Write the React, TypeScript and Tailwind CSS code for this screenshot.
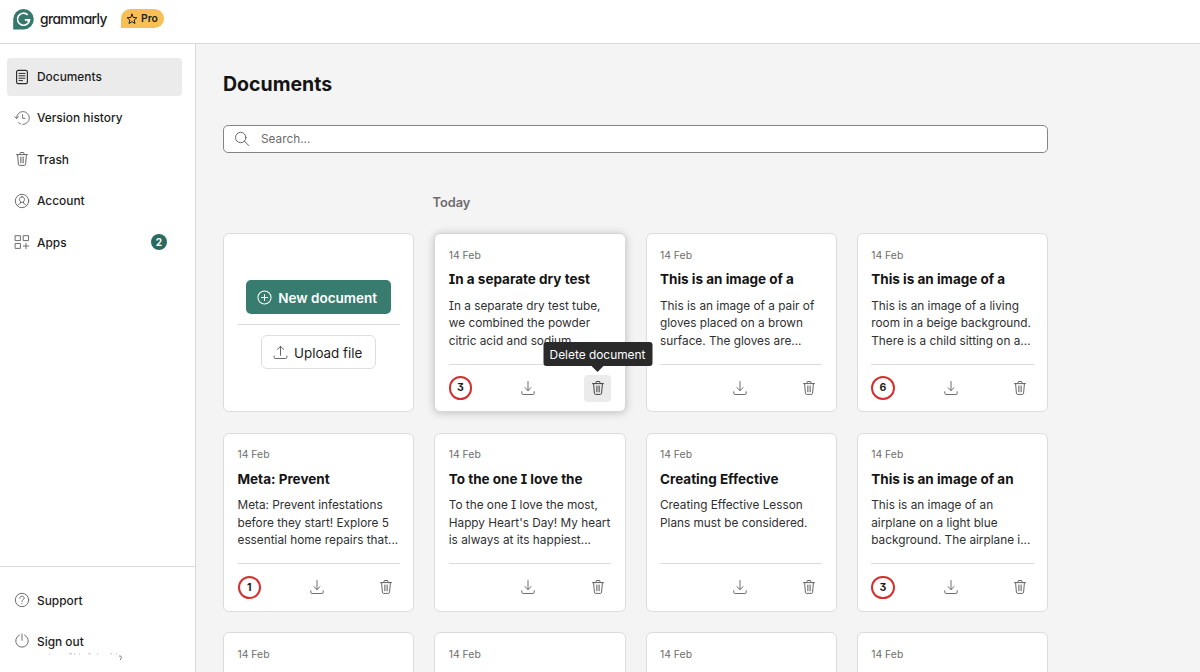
import React from "react";

type IconProps = { className?: string };

const stroke = {
  fill: "none",
  stroke: "currentColor",
  strokeLinecap: "round" as const,
  strokeLinejoin: "round" as const,
  viewBox: "0 0 16 16",
};

const DocIcon = ({ className }: IconProps) => (
  <svg {...stroke} className={className}>
    <rect x="2.6" y="1.4" width="10.8" height="13.2" rx="1.6" strokeWidth="1.15" />
    <path d="M5 4.4h6M5 6.8h6M5 9.2h6M5 11.6h3.6" strokeWidth="1" />
  </svg>
);

const HistoryIcon = ({ className }: IconProps) => (
  <svg {...stroke} className={className} strokeWidth="0.9">
    <path d="M2.5 8.2A6.4 6.4 0 1 1 8.8 14.4M4.6 12.7a6.4 6.4 0 0 0 2.1 1.3" />
    <path d="M.7 6.8l1.8 1.7 1.9-1.7M8.6 4.7v3.7h2.5" />
  </svg>
);

const TrashIcon = ({ className }: IconProps) => (
  <svg {...stroke} className={className} strokeWidth="1">
    <path d="M2.5 3.6h11M5.7 3.4l.7-1.9h3.2l.7 1.9M3.6 3.8l.8 9.4q.1 1.2 1.3 1.2h4.6q1.2 0 1.3-1.2l.8-9.4" />
    <path d="M6.6 6v5.8M9.4 6v5.8M8 6v5.8" strokeWidth="0.75" />
  </svg>
);

const AccountIcon = ({ className }: IconProps) => (
  <svg {...stroke} className={className} strokeWidth="0.95">
    <circle cx="8" cy="8" r="6.7" />
    <path d="M8 3.8c1.6 0 2.5 1.1 2.5 2.6S9.4 9.4 8 9.4 5.5 7.9 5.5 6.4 6.4 3.8 8 3.8zM6.5 9v1.2c-.2.7-1.8.6-2.7 2M9.5 9v1.2c.2.7 1.8.6 2.7 2" />
  </svg>
);

const AppsIcon = ({ className }: IconProps) => (
  <svg {...stroke} className={className} strokeWidth="0.95">
    <path d="M1.5 1.7h4.9v4.9H1.5zM9.6 1.7h4.9v4.9H9.6zM1.5 9.5h4.9v4.9H1.5zM12 9.3v5.4M9.3 12h5.4" />
  </svg>
);

const HelpIcon = ({ className }: IconProps) => (
  <svg {...stroke} className={className} strokeWidth="0.95">
    <circle cx="8" cy="8" r="6.7" />
    <path d="M5.9 6.3C5.9 4.9 6.8 4.2 8 4.2s2.2.8 2.2 1.9C10.2 7.5 8 7.7 8 9.5M8 11.6v.2" />
  </svg>
);

const PowerIcon = ({ className }: IconProps) => (
  <svg {...stroke} className={className} strokeWidth="0.95">
    <path d="M8 .9v6.4M5.4 2.1a6.3 6.3 0 1 0 5.2 0" />
  </svg>
);

const SearchIcon = ({ className }: IconProps) => (
  <svg {...stroke} className={className} strokeWidth="1">
    <circle cx="6.7" cy="6.5" r="5.2" />
    <path d="M10.5 10.3l4.3 4.3" />
  </svg>
);

const DownloadIcon = ({ className }: IconProps) => (
  <svg {...stroke} className={className} strokeWidth="0.95">
    <path d="M8 1.5v9M4.9 7.6L8 10.6l3.1-3M1.8 11.7v1.5q0 1.3 1.3 1.3h9.8q1.3 0 1.3-1.3v-1.5" />
  </svg>
);

const UploadIcon = ({ className }: IconProps) => (
  <svg {...stroke} className={className} strokeWidth="0.95">
    <path d="M8 11V1.5M4.7 4.6L8 1.5l3.3 3.1M1.2 11.7v1.5q0 1.2 1.2 1.2h11.2q1.2 0 1.2-1.2v-1.5" />
  </svg>
);

const PlusIcon = ({ className }: IconProps) => (
  <svg {...stroke} className={className} strokeWidth="1.1">
    <circle cx="8" cy="8" r="7" />
    <path d="M8 4.7v6.6M4.7 8h6.6" />
  </svg>
);

const StarIcon = ({ className }: IconProps) => (
  <svg {...stroke} className={className} strokeWidth="1.3">
    <path d="M8 1.5l1.75 4.4 4.75.35-3.6 3.1 1.1 4.65L8 11.5 4 14l1.1-4.65-3.6-3.1 4.75-.35z" />
  </svg>
);

const Logo = () => (
  <svg viewBox="0 0 21 21" className="h-[21px] w-[21px] shrink-0">
    <path d="M10.5 0A10.3 10.3 0 1 1 10.5 20.6H.2V10.3A10.3 10.3 0 0 1 10.5 0z" fill="#34796b" />
    <path d="M14.8 6A6 6 0 1 0 16.500 10.800h-4.700M16.500 10.800l-1.700 2.200" fill="none" stroke="#fff" strokeWidth="1.7" />
  </svg>
);

type NavProps = { label: string; Icon: React.FC<IconProps>; active?: boolean; badge?: number };

const NavItem = ({ label, Icon, active, badge }: NavProps) => (
  <a
    className={
      active
        ? "flex h-[38px] items-center rounded bg-[#ebebeb] pr-[15px] pl-[7px] text-[#1d1d1d]"
        : "flex h-[38px] items-center rounded pr-[15px] pl-[7px] text-[#1d1d1d]"
    }
  >
    <Icon className={active ? "h-4 w-4 text-[#2c2c2c]" : "h-4 w-4 text-[#666]"} />
    <span className="ml-[7px] flex-1 pt-px text-[11.9px] leading-[18px] font-medium">{label}</span>
    {badge && (
      <span className="flex h-4 w-4 items-center justify-center rounded-full bg-[#2b6a5f] text-[10px] font-bold text-white">
        {badge}
      </span>
    )}
  </a>
);

type Doc = { title?: string; lines?: string[]; alerts?: number; hovered?: boolean };

const docs: Doc[] = [
  { title: "In a separate dry test", lines: ["In a separate dry test tube,", "we combined the powder", "citric acid and sodium"], alerts: 3, hovered: true },
  { title: "This is an image of a", lines: ["This is an image of a pair of", "gloves placed on a brown", "surface. The gloves are..."] },
  { title: "This is an image of a", lines: ["This is an image of a living", "room in a beige background.", "There is a child sitting on a..."], alerts: 6 },
  { title: "Meta: Prevent", lines: ["Meta: Prevent infestations", "before they start! Explore 5", "essential home repairs that..."], alerts: 1 },
  { title: "To the one I love the", lines: ["To the one I love the most,", "Happy Heart's Day! My heart", "is always at its happiest..."] },
  { title: "Creating Effective", lines: ["Creating Effective Lesson", "Plans must be considered."] },
  { title: "This is an image of an", lines: ["This is an image of an", "airplane on a light blue", "background. The airplane i..."], alerts: 3 },
  {},
  {},
  {},
  {},
];

const DocCard = ({ title, lines, alerts, hovered }: Doc) => (
  <article
    className={
      hovered
        ? "flex flex-col rounded-md border border-[#d6d6d6] bg-white px-[13.5px] shadow-[0_1px_9px_rgba(0,0,0,0.22)]"
        : "flex flex-col rounded-md border border-[#dcdcdc] bg-white px-[13.5px]"
    }
  >
    <time className="mt-[13.3px] text-[10.4px] leading-4 text-[#6d6d6d]">14 Feb</time>
    {title && (
      <>
        <h3 className="mt-[5.7px] text-[13.5px] leading-[20px] font-bold whitespace-nowrap text-[#141414]">{title}</h3>
        <div className="mt-[8.1px] h-[54px] text-[11.8px] leading-[17.7px] whitespace-nowrap text-[#303030]">
          {lines?.map((l) => <p key={l}>{l}</p>)}
        </div>
        <div className="mt-[12.5px] flex h-[48px] items-center justify-between border-t border-[#dcdcdc]">
          <div className="w-6">
            {alerts && (
              <span className="flex h-[23.5px] w-[23.5px] items-center justify-center rounded-full border-2 border-[#d3302f] text-[10.5px] font-bold text-[#1b1b1b]">
                {alerts}
              </span>
            )}
          </div>
          <DownloadIcon className="h-4 w-4 text-[#666]" />
          <div
            className={
              hovered
                ? "relative flex h-[27px] w-[27px] items-center justify-center rounded bg-[#ebebeb] text-[#444]"
                : "relative flex h-[27px] w-[27px] items-center justify-center text-[#666]"
            }
          >
            <TrashIcon className="h-4 w-4" />
            {hovered && (
              <div className="absolute bottom-[35.5px] left-1/2 z-10 flex h-[24px] w-[109px] -translate-x-1/2 items-center justify-center rounded-[3px] bg-[#2a2a2a] pt-[1.5px] text-[11.9px] leading-[18px] whitespace-nowrap text-white">
                Delete document
                <svg viewBox="0 0 12 6" className="absolute top-full left-1/2 h-[6px] w-3 -translate-x-1/2">
                  <path d="M0 0h12L6 6z" fill="#2a2a2a" />
                </svg>
              </div>
            )}
          </div>
        </div>
      </>
    )}
  </article>
);

export default function App() {
  return (
    <div className="flex h-[672px] w-[1200px] flex-col overflow-hidden bg-white font-['Inter',sans-serif] text-[#1d1d1d] [font-feature-settings:'cv08','cv09']">
      <header className="flex h-[44px] shrink-0 items-start border-b border-[#dadada] pt-[9px] pl-[13px]">
        <Logo />
        <span className="ml-[6px] w-[67px] pt-px text-[13.8px] leading-[19px] font-medium tracking-[-0.6px] [font-feature-settings:'cv11']">grammarly</span>
        <span className="ml-[14px] flex h-[19px] w-[43px] items-center justify-center gap-[3px] rounded-full rounded-bl-none bg-[#f7bf56] pr-px pt-px text-[10.3px] font-semibold">
          <StarIcon className="h-3 w-3" />
          Pro
        </span>
      </header>
      <div className="flex min-h-0 flex-1">
        <aside className="flex w-[196px] shrink-0 flex-col border-r border-[#d9d9d9]">
          <nav className="flex flex-1 flex-col gap-[3.4px] px-[7px] pt-[13.5px] pr-[13px]">
            <NavItem label="Documents" Icon={DocIcon} active />
            <NavItem label="Version history" Icon={HistoryIcon} />
            <NavItem label="Trash" Icon={TrashIcon} />
            <NavItem label="Account" Icon={AccountIcon} />
            <NavItem label="Apps" Icon={AppsIcon} badge={2} />
          </nav>
          <div className="relative flex h-[106px] flex-col gap-[3.4px] border-t border-[#dadada] px-[7px] pt-[14px]">
            <NavItem label="Support" Icon={HelpIcon} />
            <NavItem label="Sign out" Icon={PowerIcon} />
            <svg viewBox="0 0 80 8" className="absolute top-[86px] left-[45px] h-2 w-20" fill="none" stroke="#666" strokeWidth="0.8">
              <path d="M4 1h1M24 .8h3M29 1h1M34.5.5v1M43.5.8h2M52 1h1M65.5.8h1.5M71 1h1" opacity="0.6" />
              <path d="M74 3q2.5-.5 2.5 1.5l-1 1.5v1" />
            </svg>
          </div>
        </aside>
        <main className="flex min-w-0 flex-1 flex-col overflow-hidden bg-[#f4f4f4] pl-[27px]">
          <h1 className="mt-[26px] text-[19.5px] leading-[28px] font-bold text-[#141414] [font-feature-settings:'cv11']">Documents</h1>
          <div className="mt-[27px] flex h-[28px] w-[825px] shrink-0 items-center rounded-[5px] border border-[#858585] bg-white pl-[10px]">
            <SearchIcon className="h-4 w-4 text-[#666]" />
            <span className="ml-[11px] text-[11.8px] leading-[18px] text-[#6b6b6b]">Search...</span>
          </div>
          <h2 className="mt-[40.2px] ml-[209.5px] text-[12.8px] leading-[20px] font-semibold text-[#6d6d6d]">Today</h2>
          <section className="mt-[20.25px] grid w-[825px] shrink-0 auto-rows-[179px] grid-cols-4 gap-x-5 gap-y-[20.4px]">
            <article className="flex flex-col items-center rounded-md border border-[#dcdcdc] bg-white px-[13.5px] pt-[45.9px]">
              <button className="flex h-[34px] w-[145px] items-center justify-center gap-[6px] rounded-[5px] bg-[#377c6e] pt-px pr-[3px] text-[13.5px] font-semibold whitespace-nowrap text-white">
                <PlusIcon className="h-[15px] w-[15px]" />
                New document
              </button>
              <div className="my-[10px] h-px w-full shrink-0 bg-[#dcdcdc]" />
              <button className="flex h-[34px] w-[115px] items-center justify-center gap-[6px] rounded-md border border-[#dedede] pt-px pr-[2px] text-[13.4px] whitespace-nowrap">
                <UploadIcon className="h-[15px] w-[15px] text-[#555]" />
                Upload file
              </button>
            </article>
            {docs.map((d, i) => (
              <DocCard key={i} {...d} />
            ))}
          </section>
        </main>
      </div>
    </div>
  );
}
